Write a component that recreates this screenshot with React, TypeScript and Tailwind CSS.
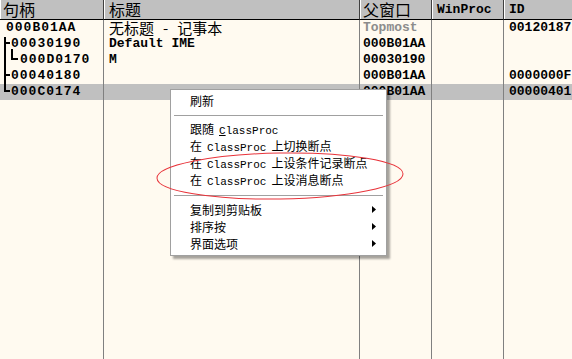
const mono = "font-['Liberation_Mono',monospace] font-bold text-[13px] leading-[16px]";
const cjk = "font-['Noto_Sans_CJK_SC',sans-serif]";

const rows = [
  { handle: '000B01AA', indent: 'pl-[6px]', title: 'notepad', parent: 'Topmost', grey: true, id: '00120187' },
  { handle: '00030190', indent: 'pl-[11px]', title: 'Default IME', parent: '000B01AA', id: '' },
  { handle: '000D0170', indent: 'pl-[20px]', title: 'M', parent: '00030190', id: '' },
  { handle: '00040180', indent: 'pl-[11px]', title: '', parent: '000B01AA', id: '0000000F' },
  { handle: '000C0174', indent: 'pl-[11px]', title: '', parent: '000B01AA', id: '00000401', selected: true },
];

function HeaderCell({ children, className = '' }: { children: React.ReactNode; className?: string }) {
  return (
    <div className={`h-[20px] bg-[#c0c0c0] border-b border-black border-r border-r-[#404040] shadow-[inset_1px_0_0_#ffffff] flex items-center whitespace-nowrap ${className}`}>
      {children}
    </div>
  );
}

function Row({ selected, children, className = '' }: { selected?: boolean; children?: React.ReactNode; className?: string }) {
  return (
    <div className={`h-[16px] flex items-center whitespace-nowrap ${selected ? 'bg-[#c0c0c0]' : ''} ${className}`}>
      {children}
    </div>
  );
}

function MenuItem({ label, sub }: { label: React.ReactNode; sub?: boolean }) {
  return (
    <div className="h-[17px] flex items-center pl-[19px] pr-[8px] text-[12px] leading-[17px] text-black whitespace-nowrap">
      <span className="flex-1">{label}</span>
      {sub && (
        <svg width="4" height="7" viewBox="0 0 4 7" className="mr-[2px]">
          <path d="M0 0 L4 3.5 L0 7 Z" fill="#000" />
        </svg>
      )}
    </div>
  );
}

const CP = ({ u }: { u?: boolean }) => (
  <span className="font-['Liberation_Mono',monospace] text-[11px] mx-[5px]">
    {u ? <><span className="underline">C</span>lassProc</> : 'ClassProc'}
  </span>
);

function Separator() {
  return (
    <div className="h-[12px] flex items-center px-[3px]">
      <div className="h-px w-full bg-[#a0a0a0]" />
    </div>
  );
}

export default function App() {
  return (
    <div className="w-[572px] h-[359px] relative overflow-hidden bg-[#fffaf0] select-none">
      <div className="flex h-full">
        {/* 句柄 */}
        <div className="w-[104px] flex flex-col shrink-0">
          <HeaderCell className={`${cjk} text-[16px] leading-[19px] pl-[3px]`}>句柄</HeaderCell>
          <div className="flex-1 border-r border-[#808080] relative">
            {rows.map((r) => (
              <Row key={r.handle} selected={r.selected} className={`${mono} tracking-[1px] ${r.indent}`}>
                {r.handle}
              </Row>
            ))}
            <svg className="absolute left-0 top-0" width="24" height="80">
              <path d="M5 17 V72 M5 23 H10 M5 55 H10 M5 71 H10 M12 29 V40 M12 39 H18" stroke="#000" strokeWidth="2" fill="none" />
            </svg>
          </div>
        </div>

        {/* 标题 */}
        <div className="w-[256px] flex flex-col shrink-0">
          <HeaderCell className={`${cjk} text-[16px] leading-[19px] pl-[5px]`}>标题</HeaderCell>
          <div className="flex-1 border-r border-[#808080]">
            {rows.map((r) =>
              r.title === 'notepad' ? (
                <Row key={r.handle} className={`pl-[5px] ${cjk} text-[15px] leading-[16px]`}>
                  无标题<span className="mx-[9px]">-</span>记事本
                </Row>
              ) : (
                <Row key={r.handle} selected={r.selected} className={`pl-[5px] ${mono}`}>
                  {r.title}
                </Row>
              )
            )}
          </div>
        </div>

        {/* 父窗口 */}
        <div className="w-[72px] flex flex-col shrink-0">
          <HeaderCell className={`${cjk} text-[16px] leading-[19px] pl-[3px]`}>父窗口</HeaderCell>
          <div className="flex-1 border-r border-[#808080]">
            {rows.map((r) => (
              <Row key={r.handle} selected={r.selected} className={`${mono} pl-[3px] ${r.grey ? 'text-[#8c8c8c]' : ''}`}>
                {r.parent}
              </Row>
            ))}
          </div>
        </div>

        {/* WinProc */}
        <div className="w-[72px] flex flex-col shrink-0">
          <HeaderCell className={`${mono} pl-[5px]`}>WinProc</HeaderCell>
          <div className="flex-1 border-r border-[#808080]">
            {rows.map((r) => (
              <Row key={r.handle} selected={r.selected} />
            ))}
          </div>
        </div>

        {/* ID */}
        <div className="flex-1 flex flex-col">
          <HeaderCell className={`${mono} pl-[5px] border-r-0`}>ID</HeaderCell>
          <div className="flex-1">
            {rows.map((r) => (
              <Row key={r.handle} selected={r.selected} className={`${mono} pl-[5px]`}>
                {r.id}
              </Row>
            ))}
          </div>
        </div>
      </div>

      {/* Context menu */}
      <div className={`absolute left-[170px] top-[89px] w-[217px] bg-white border border-[#a0a0a0] shadow-[3px_3px_2px_rgba(0,0,0,0.35)] pt-[2px] pb-[3px] ${cjk}`}>
        <MenuItem label="刷新" />
        <Separator />
        <MenuItem label={<>跟随<CP u /></>} />
        <MenuItem label={<>在<CP />上切换断点</>} />
        <MenuItem label={<>在<CP />上设条件记录断点</>} />
        <MenuItem label={<>在<CP />上设消息断点</>} />
        <Separator />
        <MenuItem label="复制到剪贴板" sub />
        <MenuItem label="排序按" sub />
        <MenuItem label="界面选项" sub />
      </div>

      {/* Red annotation ellipse */}
      <svg className="absolute inset-0 pointer-events-none" width="572" height="359">
        <ellipse cx="280" cy="176" rx="123" ry="23" transform="rotate(-1 280 176)" fill="none" stroke="#e8333a" strokeWidth="1" />
      </svg>
    </div>
  );
}
